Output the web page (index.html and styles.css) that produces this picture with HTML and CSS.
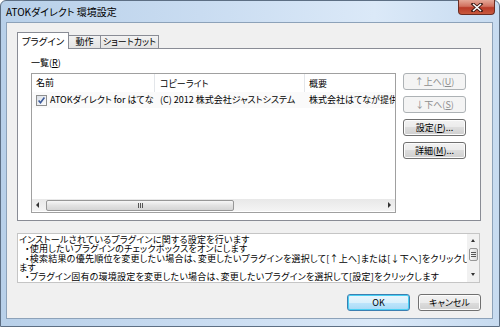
FILE: index.html
```html
<!DOCTYPE html>
<html lang="ja">
<head>
  <meta charset="UTF-8">
  <title>ATOKダイレクト 環境設定</title>
  <link rel="stylesheet" href="styles.css">
</head>
<body>

<div class="window">
  <div class="titlebar">
    <span class="title">ATOKダイレクト 環境設定</span>
    <div class="close-btn">
      <svg width="14" height="9" viewBox="0 0 14 9">
        <path d="M3 1 L11 8 M11 1 L3 8" stroke="#3a1a14" stroke-width="3.2" stroke-linecap="square"/>
        <path d="M3 1 L11 8 M11 1 L3 8" stroke="#ffffff" stroke-width="1.6"/>
      </svg>
    </div>
  </div>

  <div class="client">
    <div class="tabs">
      <div class="tab active">プラグイン</div>
      <div class="tab">動作</div>
      <div class="tab">ショートカット</div>
    </div>

    <div class="panel">
      <div class="list-label">一覧(<u>R</u>)</div>
      <div class="list-row">
        <div class="listview">
          <div class="lv-header">
            <div class="col col-name">名前</div>
            <div class="col col-copy">コピーライト</div>
            <div class="col col-desc">概要</div>
          </div>
          <div class="lv-item">
            <div class="col col-name">
              <svg class="check" width="11" height="11" viewBox="0 0 11 11">
                <defs>
                  <linearGradient id="cb" x1="0" y1="0" x2="1" y2="1">
                    <stop offset="0" stop-color="#d8dde4"/>
                    <stop offset="1" stop-color="#ffffff"/>
                  </linearGradient>
                </defs>
                <rect x="0.5" y="0.5" width="10" height="10" fill="url(#cb)" stroke="#8e8f8f"/>
                <path d="M2.6 5.4 L4.5 7.8 L8.4 2.6" fill="none" stroke="#3c5a9a" stroke-width="1.6"/>
              </svg>
              <span>ATOKダイレクト for はてな</span>
            </div>
            <div class="col col-copy">(C) 2012 株式会社ジャストシステム</div>
            <div class="col col-desc">株式会社はてなが提供</div>
          </div>
          <div class="lv-body"></div>
          <div class="hscroll">
            <span class="arrow-left"></span>
            <div class="hthumb"><span class="grip-v"></span></div>
            <span class="arrow-right"></span>
          </div>
        </div>

        <div class="side-buttons">
          <button class="btn" disabled>↑上へ(<u>U</u>)</button>
          <button class="btn" disabled>↓下へ(<u>S</u>)</button>
          <button class="btn">設定(<u>P</u>)...</button>
          <button class="btn">詳細(<u>M</u>)...</button>
        </div>
      </div>
    </div>

    <div class="desc">
      <div class="desc-text">
        <div>インストールされているプラグインに関する設定を行います</div>
        <div class="indent">・使用したいプラグインのチェックボックスをオンにします</div>
        <div class="indent">・検索結果の優先順位を変更したい場合は、変更したいプラグインを選択して[↑上へ]または[↓下へ]をクリックし</div>
        <div>ます</div>
        <div class="indent">・プラグイン固有の環境設定を変更したい場合は、変更したいプラグインを選択して[設定]をクリックします</div>
      </div>
      <div class="vscroll">
        <span class="arrow-up"></span>
        <div class="vthumb"><span class="grip-h"></span></div>
        <span class="arrow-down"></span>
      </div>
    </div>

    <div class="footer">
      <button class="btn default">OK</button>
      <button class="btn">キャンセル</button>
    </div>
  </div>
</div>

</body>
</html>
```

FILE: styles.css
```css
* {
  box-sizing: border-box;
}
body {
  margin: 0;
  font-family: "Noto Sans CJK JP", "Noto Sans", sans-serif;
  font-feature-settings: "palt";
  font-size: 9px;
  color: #000;
}
.window {
  width: 500px;
  height: 327px;
  display: flex;
  flex-direction: column;
  border: 1px solid #5d6f84;
  border-radius: 6px 6px 0 0;
  background: linear-gradient(to right, #b8d0e9, #c9dcf1 40%, #dbe9f8 75%, #c7dbf0);
  padding: 0 6px 7px 5px;
}
.titlebar {
  height: 21px;
  display: flex;
  justify-content: space-between;
  align-items: flex-start;
}
.title {
  font-size: 10px;
  line-height: 22px;
}
.close-btn {
  width: 37px;
  height: 15px;
  margin-right: -2px;
  margin-top: -1px;
  border: 1px solid #6b2c22;
  border-top: none;
  border-radius: 0 0 4px 4px;
  background: linear-gradient(to bottom, #e5a898, #d1715f 45%, #b93a28 55%, #c85a3e);
  display: flex;
  align-items: center;
  justify-content: center;
}

/* client area */
.client {
  flex: 1;
  border: 1px solid #8da2b9;
  background: #f0f0f0;
  padding: 9px 11px 0 10px;
  display: flex;
  flex-direction: column;
}
.tabs {
  height: 16px;
  display: flex;
  align-items: flex-end;
}
.tab {
  height: 13px;
  border: 1px solid #898c95;
  border-bottom: none;
  border-left: none;
  background: linear-gradient(to bottom, #f2f2f2, #e3e3e3);
  line-height: 12px;
  text-align: center;
}
.tab:nth-child(2) {
  width: 32px;
}
.tab:nth-child(3) {
  width: 58px;
}
.tab.active {
  position: relative;
  z-index: 1;
  width: 52px;
  height: 17px;
  margin-bottom: -1px;
  border-left: 1px solid #898c95;
  background: #fff;
  line-height: 16px;
  font-size: 9.5px;
}
.panel {
  height: 173px;
  border: 1px solid #898c95;
  background: #fff;
  padding: 9px 0 0 13px;
}
.list-label {
  line-height: 10px;
  margin-bottom: 5px;
}
.list-row {
  display: flex;
  gap: 7px;
}
.listview {
  width: 365px;
  height: 140px;
  border: 1px solid #a0a0a0;
  display: flex;
  flex-direction: column;
  overflow: hidden;
}
.lv-header,
.lv-item {
  display: flex;
  white-space: nowrap;
}
.lv-header {
  height: 18px;
  line-height: 20px;
}
.lv-header .col {
  border-right: 1px solid #e3e6ea;
}
.lv-item {
  height: 16px;
  line-height: 16px;
  background: #fafafa;
}
.col {
  overflow: hidden;
  flex-shrink: 0;
  padding-left: 5px;
}
.col-name {
  width: 123px;
  display: flex;
  align-items: center;
  gap: 3px;
  padding-left: 4px;
}
.col-copy {
  width: 150px;
}
.col-desc {
  width: 90px;
  padding-left: 4px;
}
.lv-header .col-desc {
  border-right: none;
}
.check {
  flex-shrink: 0;
}
.lv-body {
  flex: 1;
}
.hscroll {
  height: 12px;
  margin-bottom: 1px;
  background: linear-gradient(to bottom, #e8e8e8, #f4f4f4);
  display: flex;
  align-items: center;
  padding: 0 4px;
}
.arrow-left {
  width: 0;
  height: 0;
  border-top: 3px solid transparent;
  border-bottom: 3px solid transparent;
  border-right: 3px solid #333;
  margin-right: 7px;
}
.arrow-right {
  width: 0;
  height: 0;
  border-top: 3px solid transparent;
  border-bottom: 3px solid transparent;
  border-left: 3px solid #333;
  margin-left: auto;
}
.hthumb {
  width: 188px;
  height: 11px;
  border: 1px solid #979797;
  border-radius: 2px;
  background: linear-gradient(to bottom, #f6f6f6, #e2e2e2 50%, #d5d5d5);
  display: flex;
  align-items: center;
  justify-content: center;
}
.grip-v {
  width: 5px;
  height: 5px;
  background: repeating-linear-gradient(to right, #555 0 1px, transparent 1px 2px);
}

/* buttons */
.side-buttons {
  display: flex;
  flex-direction: column;
  gap: 6px;
}
.btn {
  width: 63px;
  height: 17px;
  padding: 0;
  font-family: inherit;
  font-feature-settings: "palt";
  font-size: 9px;
  color: #000;
  border: 1px solid #707070;
  border-radius: 3px;
  background: linear-gradient(to bottom, #f2f2f2, #ebebeb 50%, #dddddd 50%, #cfcfcf);
  box-shadow: inset 0 0 0 1px #fcfcfc;
}
.btn:disabled {
  color: #8d8d8d;
  border-color: #adb2b5;
  background: #f4f4f4;
  box-shadow: none;
}
.btn.default {
  border-color: #3c7fb1;
  background: linear-gradient(to bottom, #eaf6fd, #d9f0fc 50%, #bee6fd 50%, #a7d9f5);
  box-shadow: inset 0 0 0 1px #48d0f4;
}

/* description */
.desc {
  margin-top: 12px;
  margin-right: 1px;
  height: 50px;
  border: 1px solid #c5c5c5;
  background: #fff;
  display: flex;
}
.desc-text {
  flex: 1;
  min-width: 0;
  padding: 1px 0 0 1px;
  line-height: 9.3px;
  letter-spacing: 0.25px;
  white-space: nowrap;
}
.indent {
  padding-left: 6px;
}
.vscroll {
  width: 12px;
  flex-shrink: 0;
  background: #f1f1f1;
  display: flex;
  flex-direction: column;
  align-items: center;
  padding: 5px 0 6px;
}
.arrow-up {
  width: 0;
  height: 0;
  border-left: 2.5px solid transparent;
  border-right: 2.5px solid transparent;
  border-bottom: 3px solid #333;
}
.arrow-down {
  width: 0;
  height: 0;
  border-left: 2.5px solid transparent;
  border-right: 2.5px solid transparent;
  border-top: 3px solid #333;
  margin-top: auto;
}
.vthumb {
  margin-top: 6px;
  width: 9px;
  height: 13px;
  border: 1px solid #979797;
  border-radius: 2px;
  background: linear-gradient(to right, #f6f6f6, #dcdcdc);
  display: flex;
  align-items: center;
  justify-content: center;
}
.grip-h {
  width: 5px;
  height: 5px;
  background: repeating-linear-gradient(to bottom, #555 0 1px, transparent 1px 2px);
}

.footer {
  margin-top: 11px;
  display: flex;
  justify-content: flex-end;
  gap: 8px;
}
```
